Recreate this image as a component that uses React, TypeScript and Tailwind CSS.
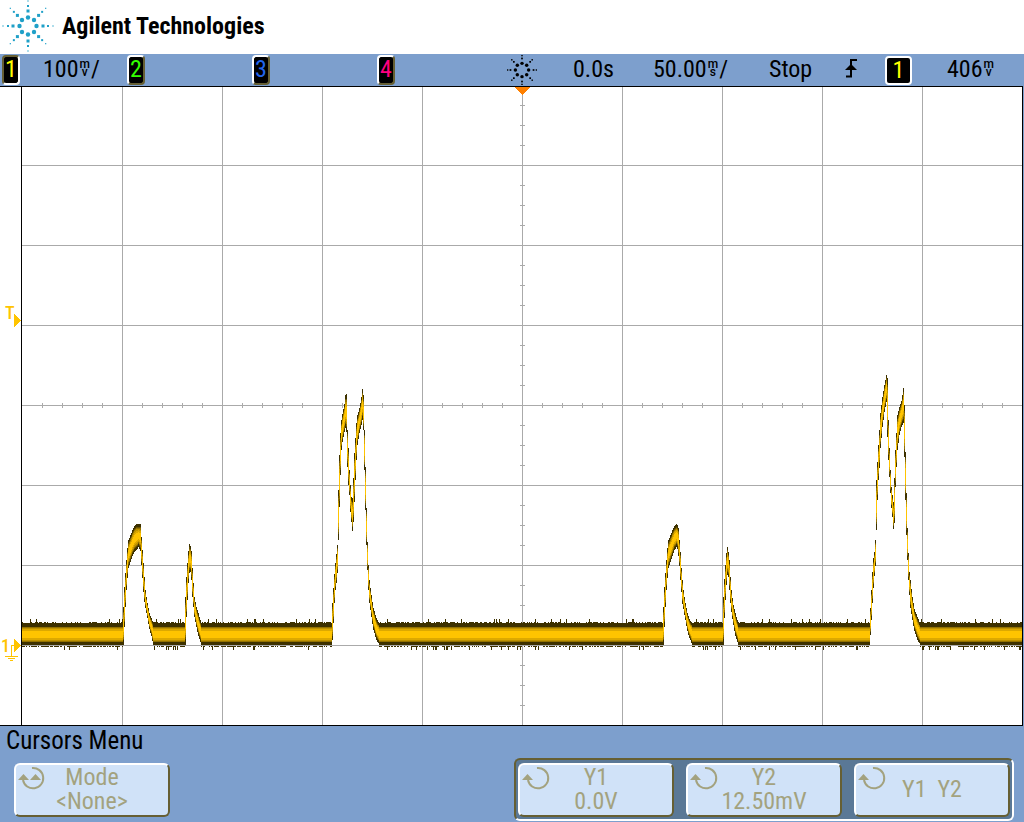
import { ReactNode } from 'react';

type Column = [x: number, top: number, bottom: number];

// [x, top, bottom] of the noise envelope, linear in between
const envelope: Column[] = [
  [22, 624, 645], [122, 624, 645],
  // first pulse
  [123, 607, 645], [124, 587, 627], [125, 573, 607], [126, 560, 590], [127, 548, 578], [128, 540, 568],
  [130, 535, 562], [132, 530, 556], [134, 526, 552], [136, 524, 550], [138, 524, 547], [140, 524, 551],
  [141, 537, 565], [142, 550, 578], [143, 563, 592], [144, 577, 602], [145, 590, 608], [147, 603, 618],
  [149, 613, 629], [151, 618, 636], [153, 624, 645], [184, 624, 645],
  [185, 597, 645], [186, 577, 617], [187, 563, 600], [188, 551, 583], [189, 544, 573], [190, 546, 572],
  [191, 551, 580], [192, 568, 597], [193, 583, 607], [194, 597, 617], [196, 607, 627], [198, 613, 636],
  [201, 624, 645], [331, 624, 645],
  // double peak
  [332, 603, 640], [333, 588, 623], [334, 574, 603], [335, 563, 590], [336, 554, 583], [337, 545, 573],
  [338, 490, 540], [339, 455, 507], [340, 433, 475], [341, 420, 450], [342, 414, 442], [344, 404, 432],
  [345, 395, 428], [346, 394, 432], [347, 430, 467], [348, 448, 485], [349, 470, 495], [350, 485, 512],
  [351, 497, 522], [352, 498, 531], [353, 478, 522], [354, 453, 502], [355, 438, 480], [356, 423, 460],
  [357, 415, 445], [359, 408, 433], [361, 397, 425], [362, 389, 420], [363, 395, 430], [364, 430, 470],
  [365, 467, 510], [366, 508, 545], [367, 542, 570], [368, 565, 590], [369, 580, 603], [371, 595, 617],
  [373, 608, 630], [376, 618, 640], [379, 624, 645], [662, 624, 645],
  // second sweep
  [663, 607, 645], [664, 587, 627], [665, 573, 607], [666, 560, 590], [667, 548, 578], [668, 540, 568],
  [670, 535, 562], [672, 530, 556], [674, 526, 550], [676, 524, 547], [677, 525, 549], [678, 528, 556],
  [679, 540, 566], [680, 552, 580], [681, 568, 592], [682, 580, 604], [683, 590, 609], [685, 603, 620],
  [687, 613, 631], [689, 619, 638], [692, 624, 645], [722, 624, 645],
  [723, 597, 645], [724, 579, 618], [725, 565, 600], [726, 553, 585], [727, 547, 575], [728, 552, 577],
  [729, 560, 590], [730, 577, 603], [731, 590, 612], [733, 605, 625], [735, 613, 636],
  [738, 624, 645], [869, 624, 645],
  [870, 608, 635], [871, 590, 620], [872, 572, 603], [873, 558, 588], [874, 552, 576], [875, 540, 566],
  [876, 480, 530], [877, 462, 500], [878, 445, 480], [879, 430, 468], [880, 413, 448], [882, 397, 427],
  [884, 385, 412], [886, 375, 402], [887, 378, 437], [888, 420, 460], [889, 448, 477], [890, 470, 493],
  [891, 487, 508], [892, 495, 517], [893, 502, 529], [894, 478, 523], [895, 450, 487], [896, 433, 467],
  [897, 415, 450], [899, 407, 435], [901, 401, 427], [903, 388, 423], [904, 405, 457], [905, 452, 500],
  [906, 493, 535], [907, 528, 560], [908, 553, 580], [909, 572, 595], [910, 580, 608], [912, 597, 620],
  [914, 609, 631], [917, 617, 640], [920, 624, 645], [1022, 624, 645],
];

// Trace intensity, from the rare outer hits to the bright middle
const layers = [
  { inset: 0, color: '#3d3100' },
  { inset: 0.12, color: '#6b5400' },
  { inset: 0.16, color: '#947200' },
  { inset: 0.21, color: '#bd9200' },
  { inset: 0.26, color: '#dda900' },
  { inset: 0.34, color: '#ffc400' },
];

function noise(n: number) {
  const v = Math.sin(n * 12.9898) * 43758.5453;
  return v - Math.floor(v);
}

const columns: Column[] = [];
for (let i = 1; i < envelope.length; i++) {
  const [x0, t0, b0] = envelope[i - 1];
  const [x1, t1, b1] = envelope[i];
  for (let x = x0; x < x1; x++) {
    const k = (x - x0) / (x1 - x0);
    columns.push([x, Math.round(t0 + (t1 - t0) * k), Math.round(b0 + (b1 - b0) * k)]);
  }
}

function layerPath(inset: number) {
  return columns
    .map(([x, top, bottom]) => {
      const d = Math.round((bottom - top) * inset);
      return `M${x} ${top + d}h1V${bottom - d}h-1z`;
    })
    .join('');
}

const fringePath = columns
  .filter(([, top]) => top === 624)
  .map(([x]) => {
    const up = noise(x) > 0.94 ? 5 : noise(x) > 0.5 ? 2 : 1;
    const down = noise(x + 2000) > 0.93 ? 5 : noise(x + 2000) > 0.35 ? 2 : 0;
    return `M${x} ${624 - up}h1V624h-1zM${x} 645h1v${down}h-1z`;
  })
  .join('');

const range = (from: number, to: number, step: number) =>
  Array.from({ length: Math.floor((to - from) / step) + 1 }, (_, i) => from + i * step);

const gridPath = [
  ...range(122, 922, 100).map((x) => `M${x} 87h1v638h-1z`),
  ...range(165, 645, 80).map((y) => `M22 ${y}h1000v1h-1000z`),
  ...range(105, 705, 20).map((y) => `M520 ${y}h5v1h-5z`),
  ...range(42, 1002, 20).map((x) => `M${x} 403h1v5h-1z`),
].join('');

function Starburst({ rings, className, size }: { rings: number[][]; className: string; size: number }) {
  return (
    <svg width={size} height={size} viewBox="-26 -26 52 52" className={className} fill="currentColor" aria-hidden="true">
      {rings.map(([radius, dot]) =>
        range(0, 315, 45).map((deg) => {
          const a = (deg * Math.PI) / 180;
          const x = Math.cos(a) * radius;
          const y = Math.sin(a) * radius;
          return dot > 3.5 ? (
            <circle key={`${radius}-${deg}`} cx={x} cy={y} r={dot / 2} />
          ) : (
            <rect key={`${radius}-${deg}`} x={x - dot / 2} y={y - dot / 2} width={dot} height={dot} />
          );
        })
      )}
    </svg>
  );
}

function Unit({ top, bottom }: { top: string; bottom: string }) {
  return (
    <span className="inline-flex flex-col items-center px-px pb-0.5 text-[12px] leading-[8px] font-medium font-['Roboto',sans-serif]">
      <span>{top}</span>
      <span>{bottom}</span>
    </span>
  );
}

function ChannelBadge({ label, color, active }: { label: string; color: string; active?: boolean }) {
  return (
    <span
      className={`flex justify-center w-[18px] h-[30px] rounded-[4px] border-2 bg-black leading-[24px] ${color} ${
        active ? 'border-t-[#665f33] border-l-[#665f33] border-r-white border-b-white' : 'border-t-white border-l-white border-r-[#665f33] border-b-[#665f33]'
      }`}
    >
      {label}
    </span>
  );
}

function StatusBar() {
  return (
    <div className="grid grid-cols-[125fr_125fr_125fr_130fr_66fr_80fr_116fr_76fr_40fr_62fr_77fr] items-center h-8 pl-0.5 bg-[#7d9fcd] text-[24px] whitespace-nowrap">
      <div className="flex items-center gap-[23px]">
        <ChannelBadge label="1" color="text-[#ffff00]" active />
        <span className="flex items-center leading-[30px] pb-0.5">
          100
          <Unit top="m" bottom="v" />/
        </span>
      </div>
      <ChannelBadge label="2" color="text-[#33ff00]" />
      <ChannelBadge label="3" color="text-[#2266ee]" />
      <ChannelBadge label="4" color="text-[#ff0080]" />
      <Starburst rings={[[11.5, 6], [20, 3], [25, 2.5]]} size={30} className="text-black" />
      <span className="leading-[30px] pb-0.5">0.0s</span>
      <span className="flex items-center leading-[30px] pb-0.5">
        50.00
        <Unit top="m" bottom="s" />/
      </span>
      <span className="leading-[30px] pb-0.5">Stop</span>
      <svg width="13" height="20" viewBox="0 0 13 20" className="mb-1" aria-hidden="true">
        <path d="M1 18.5H6V2H12" fill="none" stroke="black" strokeWidth="2" />
        <path d="M6 6L12 12H0z" />
      </svg>
      <span className="flex justify-center w-[27px] h-[29px] rounded-[4px] border-2 border-white bg-black text-[#ffff00] leading-[24px]">
        1
      </span>
      <span className="flex items-center leading-[30px] pb-0.5">
        406
        <Unit top="m" bottom="v" />
      </span>
    </div>
  );
}

function Plot() {
  return (
    <svg viewBox="0 86 1024 640" className="block w-full h-auto" shapeRendering="crispEdges" role="img" aria-label="Channel 1 waveform">
      <rect x="0" y="86" width="1023" height="640" fill="white" />
      <rect x="1023" y="86" width="1" height="640" fill="#7d9fcd" />
      <path d={gridPath} fill="#aaaaaa" />

      <path d={fringePath} fill="#3d3100" />
      {layers.map((layer) => (
        <path key={layer.color} d={layerPath(layer.inset)} fill={layer.color} />
      ))}
      <path d="M22 645h1000v1h-1000z" fill="#aaaaaa" />

      <path d="M0 86h1023v1H0zM0 725h1023v1H0zM21 86h1v640h-1zM1022 86h1v640h-1z" fill="black" />
      <path d="M515 87h15l-7.500 8z" fill="#ff8000" />

      {/* trigger level and ground markers */}
      <g fill="#ffc400">
        <path d="M14 314l7 6.500l-7 6.500zM14 639l7 6.500l-7 6.500z" />
        <path d="M11 645h3v1h-2v10h-1zM5 656h13v1h-13zM8 658h7v1h-7zM10 660h3v1h-3z" />
        <text x="5" y="319" fontSize="18" fontWeight="500">T</text>
        <text x="1" y="652" fontSize="18" fontWeight="500">1</text>
      </g>
    </svg>
  );
}

function KnobIcon({ double }: { double?: boolean }) {
  return (
    <svg width="28" height="24" viewBox="0 0 28 24" className="absolute left-0.5 top-px" aria-hidden="true">
      {double ? (
        <>
          <path d="M14 2A10.200 10.200 0 1 1 5 14" fill="none" stroke="currentColor" strokeWidth="2" />
          <path d="M0 14L5.500 8L11 14zM12 14L17.500 8L23 14z" fill="currentColor" />
        </>
      ) : (
        <>
          <path d="M15 2A10.200 10.200 0 1 1 6 14" fill="none" stroke="currentColor" strokeWidth="2" />
          <path d="M0 14L5.500 8L11 14z" fill="currentColor" />
        </>
      )}
    </svg>
  );
}

function Softkey({ children, double }: { children: ReactNode; double?: boolean }) {
  return (
    <button
      disabled
      className="relative flex flex-col items-center justify-center w-[156px] h-[54px] pb-0.5 rounded-[6px] border-2 border-t-white border-l-white border-r-[#665f33] border-b-[#665f33] bg-[#d0e2f8] text-[#a3a27f] text-[24px] leading-[24px]"
    >
      <KnobIcon double={double} />
      {children}
    </button>
  );
}

export default function App() {
  return (
    <div className="min-h-screen bg-[#7d9fcd] text-black font-['Roboto_Condensed','Roboto',sans-serif]">
      <header className="flex items-center gap-2 h-[54px] pl-0.5 pb-[3px] bg-white">
        <Starburst rings={[[8.5, 4.4], [15, 3], [20, 2], [25, 1.2]]} size={52} className="text-[#1fa0c8]" />
        <h1 className="text-[24px] leading-[30px] font-bold">Agilent Technologies</h1>
      </header>
      <StatusBar />
      <Plot />
      <footer>
        <h2 className="h-8 pl-1.5 text-[25px] leading-[30px]">Cursors Menu</h2>
        <div className="flex justify-between items-center pl-3.5 pr-2.5">
          <Softkey double>
            <span>Mode</span>
            <span>&lt;None&gt;</span>
          </Softkey>
          <div className="flex gap-3 pt-[3px] px-0.5 pb-0.5 rounded-[6px] border-2 border-t-[#665f33] border-l-[#665f33] border-r-white border-b-white bg-[#5a7896]">
            <Softkey>
              <span>Y1</span>
              <span>0.0V</span>
            </Softkey>
            <Softkey>
              <span>Y2</span>
              <span>12.50mV</span>
            </Softkey>
            <Softkey>
              <span>Y1&nbsp; Y2</span>
            </Softkey>
          </div>
        </div>
      </footer>
    </div>
  );
}
